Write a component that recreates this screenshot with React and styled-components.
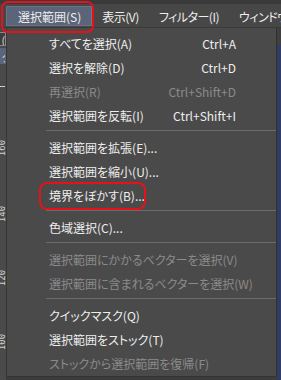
import React from "react";
import styled, { createGlobalStyle } from "styled-components";

const GlobalStyle = createGlobalStyle`
  html, body { margin: 0; padding: 0; background: #3c3c3c; }
  * { box-sizing: border-box; }
`;

const font = `"Noto Sans CJK JP", "Noto Sans", sans-serif`;

const Screen = styled.div`
  position: relative;
  width: 281px;
  height: 380px;
  overflow: hidden;
  background: #3c3c3c;
  font-family: ${font};
  font-feature-settings: "palt";
  display: flex;
  flex-direction: column;
`;

const MenuBar = styled.div`
  height: 28px;
  flex: none;
  display: flex;
  align-items: flex-end;
  padding: 0 0 1px 6px;
  background: #474747;
  border-top: 4px solid #3a3a3a;
  border-bottom: 1px solid #3a3a3a;
  overflow: hidden;
`;

const BarItem = styled.div`
  height: 20px;
  display: flex;
  align-items: center;
  padding: ${(p) => (p.$active ? "0 10px 0 11px" : "0 9px")};
  font-size: 12px;
  letter-spacing: ${(p) => (p.$active ? "0" : "-0.5px")};
  white-space: nowrap;
  color: #eeeeee;
  background: ${(p) => (p.$active ? "#5b6478" : "transparent")};
  border: 1px solid ${(p) => (p.$active ? "#6a7388" : "transparent")};
`;

const Body = styled.div`
  flex: 1;
  display: flex;
  min-height: 0;
`;

const LeftStrip = styled.div`
  width: 6px;
  flex: none;
  display: flex;
  flex-direction: column;
  background: #4a4a4a;
  overflow: hidden;
`;

const StripBox = styled.div`
  height: ${(p) => p.$h}px;
  margin-top: ${(p) => p.$mt}px;
  width: 8px;
  margin-left: -2px;
  font-size: 11px;
  line-height: ${(p) => p.$h}px;
  color: #d8d8d8;
  background: ${(p) => p.$bg};
  border: 1px solid ${(p) => p.$bd};
  overflow: hidden;
  white-space: nowrap;
`;

const StripLine = styled.div`
  height: 1px;
  width: 5px;
  margin-top: ${(p) => p.$mt}px;
  background: #d0d0d0;
`;

const RulerLabel = styled.div`
  height: 26px;
  margin-top: ${(p) => p.$mt}px;
  width: 6px;
  position: relative;
  overflow: hidden;
  span {
    position: absolute;
    left: -6px;
    top: 6px;
    font-size: 9px;
    color: #cfcfcf;
    transform: rotate(-90deg);
    transform-origin: center;
    white-space: nowrap;
    font-family: "DejaVu Sans Mono", monospace;
  }
`;

const Menu = styled.div`
  flex: none;
  width: 271px;
  height: 349px;
  display: flex;
  flex-direction: column;
  background: #4a4a4a;
  border-left: 1px solid #363636;
  border-right: 1px solid #303030;
  border-bottom: 1px solid #333333;
  padding: 3px 0 1px;
`;

const Item = styled.div`
  height: 24px;
  flex: none;
  display: flex;
  align-items: center;
  justify-content: space-between;
  padding: 0 40px 0 42px;
  font-size: 12px;
  white-space: nowrap;
  color: ${(p) => (p.$disabled ? "#8b8b8b" : "#eeeeee")};
`;

const Shortcut = styled.span`
  text-align: right;
`;

const Separator = styled.div`
  height: 8px;
  flex: none;
  padding: 3px 0 0 39px;
  &::after {
    content: "";
    display: block;
    height: 1px;
    background: #6b6b6b;
  }
`;

const RightStrip = styled.div`
  flex: 1;
  background: #2f3c66;
  border-top: 17px solid #3f3f3f;
`;

const Outline = styled.div`
  position: absolute;
  left: ${(p) => p.$x}px;
  top: ${(p) => p.$y}px;
  width: ${(p) => p.$w}px;
  height: ${(p) => p.$h}px;
  border: 2.5px solid #e5121c;
  border-radius: ${(p) => p.$r}px;
  pointer-events: none;
`;

const menuBar = ["選択範囲(S)", "表示(V)", "フィルター(I)", "ウィンドウ(W)"];

const items = [
  { label: "すべてを選択(A)", key: "Ctrl+A" },
  { label: "選択を解除(D)", key: "Ctrl+D" },
  { label: "再選択(R)", key: "Ctrl+Shift+D", disabled: true },
  { label: "選択範囲を反転(I)", key: "Ctrl+Shift+I" },
  { sep: true },
  { label: "選択範囲を拡張(E)..." },
  { label: "選択範囲を縮小(U)..." },
  { label: "境界をぼかす(B)..." },
  { sep: true },
  { label: "色域選択(C)..." },
  { sep: true },
  { label: "選択範囲にかかるベクターを選択(V)", disabled: true },
  { label: "選択範囲に含まれるベクターを選択(W)", disabled: true },
  { sep: true },
  { label: "クイックマスク(Q)" },
  { label: "選択範囲をストック(T)" },
  { label: "ストックから選択範囲を復帰(F)", disabled: true },
];

export default function App() {
  return (
    <Screen>
      <GlobalStyle />
      <MenuBar>
        {menuBar.map((m, i) => (
          <BarItem key={m} $active={i === 0}>
            {m}
          </BarItem>
        ))}
      </MenuBar>
      <Body>
        <LeftStrip>
          <StripBox $h={14} $mt={4} $bg="#3e3e3e" $bd="#8a8a8a">
            &nbsp;(
          </StripBox>
          <StripBox $h={16} $mt={2} $bg="#5b6478" $bd="#5b6478">
            &nbsp;ク
          </StripBox>
          <StripLine $mt={22} />
          <RulerLabel $mt={50}>
            <span>160</span>
          </RulerLabel>
          <RulerLabel $mt={40}>
            <span>140</span>
          </RulerLabel>
          <RulerLabel $mt={38}>
            <span>120</span>
          </RulerLabel>
          <RulerLabel $mt={38}>
            <span>100</span>
          </RulerLabel>
        </LeftStrip>
        <Menu>
          {items.map((it, i) =>
            it.sep ? (
              <Separator key={i} />
            ) : (
              <Item key={i} $disabled={it.disabled}>
                <span>{it.label}</span>
                {it.key && <Shortcut>{it.key}</Shortcut>}
              </Item>
            )
          )}
        </Menu>
        <RightStrip />
      </Body>
      <Outline $x={1} $y={1} $w={93} $h={32} $r={7} />
      <Outline $x={39} $y={182} $w={107} $h={28} $r={8} />
    </Screen>
  );
}
